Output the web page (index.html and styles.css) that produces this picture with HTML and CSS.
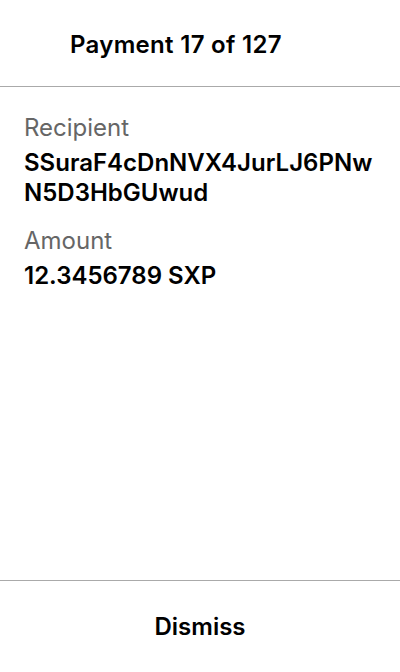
FILE: index.html
```html
<!DOCTYPE html>
<html>
<head>
<meta charset="utf-8">
<link rel="stylesheet" href="styles.css">
</head>
<body>
<div class="screen">
  <header class="header">
    <h1 class="title">Payment 17 of 127</h1>
  </header>
  <main class="content">
    <div class="field">
      <div class="label">Recipient</div>
      <div class="value">SSuraF4cDnNVX4JurLJ6PNw<br>N5D3HbGUwud</div>
    </div>
    <div class="field">
      <div class="label">Amount</div>
      <div class="value">12.3456789 SXP</div>
    </div>
  </main>
  <footer class="footer">
    <button class="dismiss">Dismiss</button>
  </footer>
</div>
</body>
</html>
```
FILE: styles.css
```css
html, body {
  margin: 0;
  padding: 0;
  background: #fff;
}
body {
  font-family: Inter, "Noto Sans", sans-serif;
  color: #000;
}
.screen {
  display: flex;
  flex-direction: column;
  height: 672px;
  width: 400px;
}
.header {
  height: 87px;
  border-bottom: 1px solid #aaa;
  display: flex;
  align-items: center;
  padding: 2px 0 0 70px;
  box-sizing: border-box;
  flex-shrink: 0;
}
.title {
  margin: 0;
  font-size: 24px;
  font-weight: 600;
  letter-spacing: 0.3px;
  line-height: 29px;
}
.content {
  flex: 1;
  padding: 26px 24px 0;
  display: flex;
  flex-direction: column;
  gap: 18px;
}
.label {
  font-size: 24px;
  color: #666;
  line-height: 29px;
}
.value {
  font-size: 24px;
  font-weight: 600;
  line-height: 30px;
  margin-top: 6px;
}
.footer {
  height: 92px;
  border-top: 1px solid #aaa;
  box-sizing: border-box;
  display: flex;
  align-items: center;
  justify-content: center;
  flex-shrink: 0;
}
.dismiss {
  background: none;
  border: none;
  font-family: Inter, "Noto Sans", sans-serif;
  font-size: 24px;
  font-weight: 600;
  color: #000;
  padding: 0;
  line-height: 29px;
}
```
